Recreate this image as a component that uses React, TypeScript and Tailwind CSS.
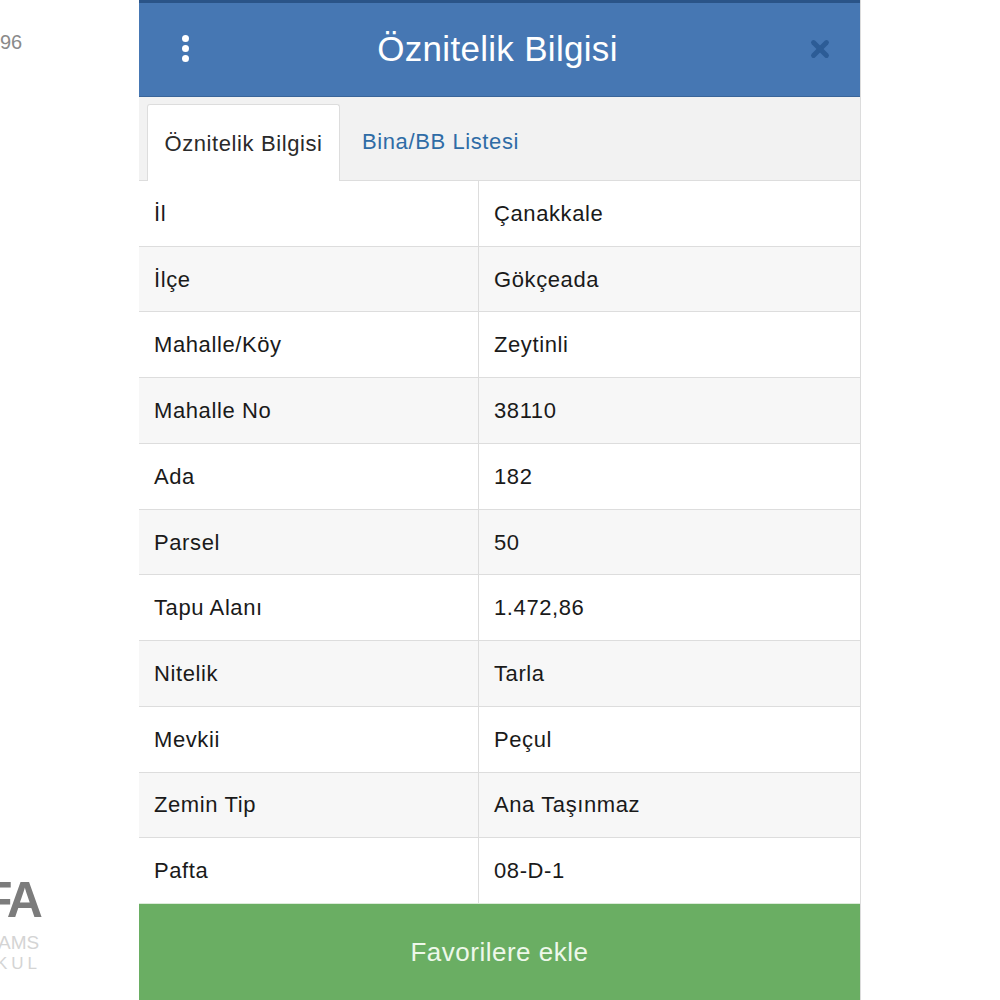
import React from 'react';
import { X } from 'lucide-react';

const rows: [string, string][] = [
    ['İl', 'Çanakkale'],
    ['İlçe', 'Gökçeada'],
    ['Mahalle/Köy', 'Zeytinli'],
    ['Mahalle No', '38110'],
    ['Ada', '182'],
    ['Parsel', '50'],
    ['Tapu Alanı', '1.472,86'],
    ['Nitelik', 'Tarla'],
    ['Mevkii', 'Peçul'],
    ['Zemin Tip', 'Ana Taşınmaz'],
    ['Pafta', '08-D-1'],
];

const App: React.FC = () => {
    return (
        <div className="flex h-[1000px] w-[1000px] overflow-hidden bg-white font-['Liberation_Sans',Arial,sans-serif]">
            {/* left page remnants */}
            <div className="w-[139px] shrink-0 flex flex-col justify-between overflow-hidden">
                <div className="pt-[32px] text-[20px] leading-none text-[#8a8a8a]">96</div>
                <div className="pb-[28px] flex flex-col">
                    <div className="ml-[-18px] text-[50px] font-bold leading-none text-[#7c7c7c] tracking-[-3px]">FA</div>
                    <div className="ml-[-2px] mt-[8px] text-[19px] leading-none text-[#d4d4d4]">AMS</div>
                    <div className="ml-[-4px] mt-[3px] text-[17px] leading-none text-[#d4d4d4] tracking-[4px]">KUL</div>
                </div>
            </div>

            {/* panel */}
            <div className="w-[722px] shrink-0 flex flex-col border-r border-[#dcdcdc]">
                <div className="h-[97px] shrink-0 flex flex-col bg-[#4677b3] border-b border-[#3a6599]">
                    <div className="h-[3px] bg-[#2a5488]"></div>
                    <div className="flex-1 flex items-center px-[41px] pb-[2px]">
                        <div className="w-[10px] flex flex-col items-center gap-[3px]">
                            <div className="w-[7px] h-[7px] rounded-full bg-white"></div>
                            <div className="w-[7px] h-[7px] rounded-full bg-white"></div>
                            <div className="w-[7px] h-[7px] rounded-full bg-white"></div>
                        </div>
                        <div className="flex-1 text-center text-white text-[35px] leading-none tracking-[0.3px] pr-[2px]">Öznitelik Bilgisi</div>
                        <X className="w-[26px] h-[26px] text-[#2c5c96] mr-[-14px]" strokeWidth={4.5} />
                    </div>
                </div>

                <div className="h-[84px] shrink-0 flex items-end bg-[#f2f2f2] border-b border-[#dddddd] pl-[8px]">
                    <div className="h-[77px] w-[193px] mb-[-1px] flex items-center justify-center bg-white border border-b-0 border-[#dddddd] rounded-t-[3px] text-[22px] text-[#2a2a2a] tracking-[0.6px]">
                        Öznitelik Bilgisi
                    </div>
                    <div className="h-[77px] pl-[22px] flex items-center text-[22px] text-[#2f6ca6] tracking-[0.6px]">
                        Bina/BB Listesi
                    </div>
                </div>

                <div className="flex-1 flex flex-col">
                    {rows.map(([k, v], i) => (
                        <div
                            key={k}
                            className={`flex-1 flex ${i < rows.length - 1 ? 'border-b border-[#dddddd]' : ''} ${i % 2 === 1 ? 'bg-[#f7f7f7]' : 'bg-white'}`}
                        >
                            <div className="w-[340px] shrink-0 flex items-center pl-[15px] border-r border-[#dddddd] text-[22px] text-[#1a1a1a] tracking-[0.6px]">{k}</div>
                            <div className="flex-1 flex items-center pl-[15px] text-[22px] text-[#1a1a1a] tracking-[0.6px]">{v}</div>
                        </div>
                    ))}
                </div>

                <div className="h-[97px] shrink-0 flex items-center justify-center bg-[#6aae63] border-t border-[#dcebd9] text-[26px] text-[#eef8ea] tracking-[0.5px]">
                    Favorilere ekle
                </div>
            </div>

            <div className="flex-1"></div>
        </div>
    );
};

export default App;
